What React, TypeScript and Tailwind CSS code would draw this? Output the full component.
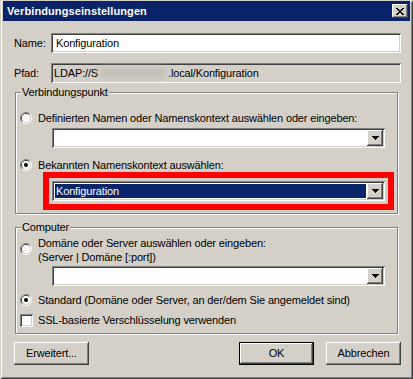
import React from 'react';

const raised =
  'shadow-[inset_-1px_-1px_#404040,inset_1px_1px_#ffffff,inset_-2px_-2px_#808080,inset_2px_2px_#d4d0c8]';
const sunken =
  'shadow-[inset_1px_1px_#808080,inset_-1px_-1px_#ffffff,inset_2px_2px_#404040,inset_-2px_-2px_#d4d0c8]';

function Radio({ checked }: { checked?: boolean }) {
  return (
    <svg width="12" height="12" viewBox="0 0 12 12" className="shrink-0">
      <path d="M2.11 9.89 A5.5 5.5 0 0 1 9.89 2.11" stroke="#808080" fill="none" />
      <path d="M9.89 2.11 A5.5 5.5 0 0 1 2.11 9.89" stroke="#ffffff" fill="none" />
      <path d="M2.82 9.18 A4.5 4.5 0 0 1 9.18 2.82" stroke="#404040" fill="none" />
      <path d="M9.18 2.82 A4.5 4.5 0 0 1 2.82 9.18" stroke="#d4d0c8" fill="none" />
      <circle cx="6" cy="6" r="4" fill="#ffffff" />
      {checked && <circle cx="6" cy="6" r="2" fill="#000000" />}
    </svg>
  );
}

function Arrow() {
  return (
    <svg width="7" height="4" viewBox="0 0 7 4" shapeRendering="crispEdges">
      <rect x="0" y="0" width="7" height="1" fill="#000" />
      <rect x="1" y="1" width="5" height="1" fill="#000" />
      <rect x="2" y="2" width="3" height="1" fill="#000" />
      <rect x="3" y="3" width="1" height="1" fill="#000" />
    </svg>
  );
}

function CloseGlyph() {
  const rows = ['XX....XX', '.XX..XX.', '..XXXX..', '...XX...', '..XXXX..', '.XX..XX.', 'XX....XX'];
  return (
    <svg width="8" height="7" viewBox="0 0 8 7" shapeRendering="crispEdges">
      {rows.map((r, y) =>
        r.split('').map((c, x) => (c === 'X' ? <rect key={`${x}-${y}`} x={x} y={y} width="1" height="1" fill="#000" /> : null))
      )}
    </svg>
  );
}

function Combo({ value, selected }: { value?: string; selected?: boolean }) {
  return (
    <div className={`flex h-[20px] w-[333px] bg-white p-[2px] ${sunken}`}>
      <div className="flex flex-1 p-[1px]">
        {selected ? (
          <div className="flex flex-1 items-center bg-[#0a246a] pl-[1px] text-white">{value}</div>
        ) : (
          <div className="flex flex-1 items-center pl-[1px]">{value}</div>
        )}
      </div>
      <div className={`flex w-[16px] items-center justify-center bg-[#d4d0c8] ${raised}`}>
        <Arrow />
      </div>
    </div>
  );
}

function GroupBox({ label, children }: { label: string; children: React.ReactNode }) {
  return (
    <div className="relative ml-[1px] mr-[3px] border border-[#808080] shadow-[inset_1px_1px_#ffffff,1px_1px_#ffffff]">
      <span className="absolute left-[5px] top-[-8px] bg-[#d4d0c8] px-[1px] leading-[14px]">{label}</span>
      {children}
    </div>
  );
}

function Button({ label, isDefault }: { label: string; isDefault?: boolean }) {
  return (
    <div
      className={`flex h-[23px] w-[75px] items-center justify-center bg-[#d4d0c8] ${
        isDefault ? 'border border-black' : ''
      }`}
    >
      <div className={`flex h-full w-full items-center justify-center ${raised}`}>{label}</div>
    </div>
  );
}

export default function App() {
  return (
    <div
      className={`flex h-[379px] w-[413px] flex-col bg-[#d4d0c8] px-[3px] pt-[1px] text-[11px] text-black font-['Liberation_Sans',Arial,sans-serif] shadow-[inset_1px_1px_#d4d0c8,inset_-1px_-1px_#404040,inset_2px_2px_#ffffff,inset_-2px_-2px_#808080]`}
    >
      {/* title bar */}
      <div className="flex h-[20px] items-center justify-between bg-[#0a246a] pl-[4px] pr-[2px]">
        <span className="text-[11px] font-bold tracking-[0.1px] text-white">Verbindungseinstellungen</span>
        <div className={`flex h-[14px] w-[16px] items-center justify-center bg-[#d4d0c8] ${raised}`}>
          <CloseGlyph />
        </div>
      </div>

      <div className="flex flex-col pl-[11px] pr-[9px] tracking-[-0.15px]">
        <div className="mt-[12px] flex items-center">
          <span className="w-[37px]">Name:</span>
          <div className={`flex h-[20px] flex-1 items-center bg-white pl-[5px] ${sunken}`}>Konfiguration</div>
        </div>

        <div className="mt-[10px] flex items-center">
          <span className="w-[37px]">Pfad:</span>
          <div className={`flex h-[20px] flex-1 items-center bg-[#d4d0c8] pl-[3px] ${sunken}`}>
            <span>LDAP://S</span>
            <span className="mx-[1px] inline-block h-[10px] w-[68px] rounded-sm bg-[#c2beb6] blur-[3px]" />
            <span>.local/Konfiguration</span>
          </div>
        </div>

        <div className="mt-[9px]">
          <GroupBox label="Verbindungspunkt">
            <div className="flex flex-col pb-[3px] pl-[4px] pt-[18px]">
              <div className="flex h-[14px] items-center gap-[6px]">
                <Radio />
                <span>Definierten Namen oder Namenskontext auswählen oder eingeben:</span>
              </div>
              <div className="ml-[32px] mt-[3px]">
                <Combo />
              </div>
              <div className="mt-[10px] flex h-[14px] items-center gap-[6px]">
                <Radio checked />
                <span>Bekannten Namenskontext auswählen:</span>
              </div>
              <div className="ml-[23px] w-[351px] border-[6px] border-[#ff0000] p-[3px]">
                <Combo value="Konfiguration" selected />
              </div>
            </div>
          </GroupBox>
        </div>

        <div className="mt-[13px]">
          <GroupBox label="Computer">
            <div className="flex flex-col pb-[6px] pl-[4px] pt-[8px]">
              <div className="flex items-start gap-[6px]">
                <div className="mt-[7px]">
                  <Radio />
                </div>
                <div className="flex flex-col leading-[14px]">
                  <span>Domäne oder Server auswählen oder eingeben:</span>
                  <span>(Server | Domäne [:port])</span>
                </div>
              </div>
              <div className="ml-[32px] mt-[2px]">
                <Combo />
              </div>
              <div className="mt-[7px] flex h-[14px] items-center gap-[6px]">
                <Radio checked />
                <span>Standard (Domäne oder Server, an der/dem Sie angemeldet sind)</span>
              </div>
              <div className="mt-[6px] flex h-[14px] items-center gap-[5px]">
                <div className={`h-[13px] w-[13px] shrink-0 bg-white ${sunken}`} />
                <span>SSL-basierte Verschlüsselung verwenden</span>
              </div>
            </div>
          </GroupBox>
        </div>

        <div className="mt-[8px] flex items-center">
          <Button label="Erweitert..." />
          <div className="flex-1" />
          <Button label="OK" isDefault />
          <div className="w-[12px]" />
          <Button label="Abbrechen" />
        </div>
      </div>
    </div>
  );
}
